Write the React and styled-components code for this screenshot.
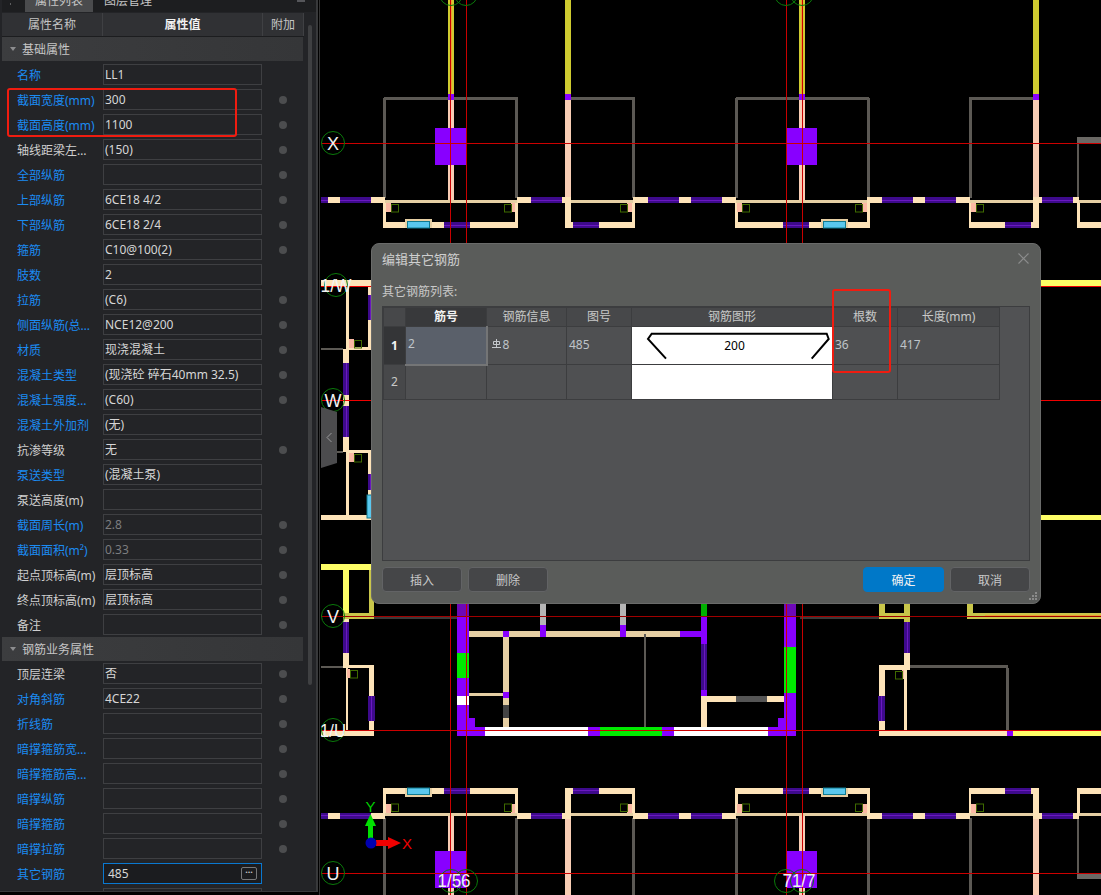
import React from 'react';
import styled, { createGlobalStyle } from 'styled-components';

const FONT = '"Noto Sans", "Noto Sans CJK SC", sans-serif';

const GlobalStyle = createGlobalStyle`
  html, body {
    margin: 0;
    padding: 0;
    background: #000;
  }
  body {
    font-family: ${FONT};
    font-size: 12px;
  }
`;

const rows = [
  { label: '名称', value: 'LL1', blue: true },
  { label: '截面宽度(mm)', value: '300', blue: true, dot: true },
  { label: '截面高度(mm)', value: '1100', blue: true, dot: true },
  { label: '轴线距梁左边线距离(mm)', value: '(150)', dot: true },
  { label: '全部纵筋', value: '', blue: true, dot: true },
  { label: '上部纵筋', value: '6CE18 4/2', blue: true, dot: true },
  { label: '下部纵筋', value: '6CE18 2/4', blue: true, dot: true },
  { label: '箍筋', value: 'C10@100(2)', blue: true, dot: true },
  { label: '肢数', value: '2', blue: true },
  { label: '拉筋', value: '(C6)', blue: true, dot: true },
  { label: '侧面纵筋(总配筋值)', value: 'NCE12@200', blue: true, dot: true },
  { label: '材质', value: '现浇混凝土', blue: true, dot: true },
  { label: '混凝土类型', value: '(现浇砼 碎石40mm 32.5)', blue: true, dot: true },
  { label: '混凝土强度等级', value: '(C60)', blue: true, dot: true },
  { label: '混凝土外加剂', value: '(无)', blue: true },
  { label: '抗渗等级', value: '无', dot: true },
  { label: '泵送类型', value: '(混凝土泵)', blue: true },
  { label: '泵送高度(m)', value: '' },
  { label: '截面周长(m)', value: '2.8', blue: true, dot: true, dim: true },
  { label: '截面面积(m²)', value: '0.33', blue: true, dot: true, dim: true },
  { label: '起点顶标高(m)', value: '层顶标高', dot: true },
  { label: '终点顶标高(m)', value: '层顶标高', dot: true },
  { label: '备注', value: '', dot: true },
];

const rebarRows = [
  { label: '顶层连梁', value: '否', dot: true },
  { label: '对角斜筋', value: '4CE22', blue: true, dot: true },
  { label: '折线筋', value: '', blue: true, dot: true },
  { label: '暗撑箍筋宽度(mm)', value: '', blue: true, dot: true },
  { label: '暗撑箍筋高度(mm)', value: '', blue: true, dot: true },
  { label: '暗撑纵筋', value: '', blue: true, dot: true },
  { label: '暗撑箍筋', value: '', blue: true, dot: true },
  { label: '暗撑拉筋', value: '', blue: true, dot: true },
  { label: '其它钢筋', value: '485', blue: true, active: true },
  { label: '', value: '' },
];

const Page = styled.div`
  display: flex;
  width: 1101px;
  height: 895px;
  overflow: hidden;
  background: #000;
`;

const Panel = styled.aside`
  position: relative;
  flex: 0 0 318px;
  height: 892px;
  display: flex;
  flex-direction: column;
  overflow: hidden;
  box-sizing: border-box;
  padding-left: 2px;
  background: #232427;
  border-right: 2px solid #38393b;
  border-bottom: 1px solid #38393b;
`;

const TabBar = styled.div`
  flex: 0 0 12px;
  display: flex;
  align-items: flex-end;
  overflow: hidden;
  background: #1d1e20;
`;

const Grip = styled.span`
  width: 7px;
  height: 4px;
  margin: 0 10px 6px 6px;
  background-image: radial-gradient(#5d5e60 1px, transparent 1px);
  background-size: 5px 4px;
`;

const Tab = styled.div`
  flex: 0 0 auto;
  width: ${(p) => (p.$on ? '68px' : '70px')};
  height: 22px;
  line-height: 22px;
  text-align: center;
  color: #c6c6c6;
  background: ${(p) => (p.$on ? '#4a4b4d' : 'transparent')};
  font-size: 12px;
`;

const PinMark = styled.span`
  align-self: flex-start;
  width: 8px;
  height: 2px;
  margin: 0 11px 0 auto;
  background: #55565a;
`;

const HeadRow = styled.div`
  flex: 0 0 24px;
  width: 302px;
  display: grid;
  grid-template-columns: 101px 160px 41px;
  background: #303134;
  margin-top: 1px;
  box-sizing: border-box;
  border-bottom: 1px solid #1c1d1f;
`;

const HeadCell = styled.div`
  line-height: 23px;
  text-align: center;
  color: ${(p) => (p.$strong ? '#f0f0f0' : '#c4c4c4')};
  font-weight: ${(p) => (p.$strong ? 700 : 400)};
  border-right: 1px solid #3f4043;
`;

const GroupRow = styled.div`
  flex: 0 0 24px;
  width: 301px;
  display: flex;
  align-items: center;
  gap: 6px;
  padding-left: 8px;
  box-sizing: border-box;
  background: linear-gradient(90deg, #3c3d3f, #353638);
  color: #c6c6c6;
  margin-bottom: ${(p) => p.$gap || 0}px;
`;

const GroupArrow = styled.span`
  width: 0;
  height: 0;
  border-left: 3px solid transparent;
  border-right: 3px solid transparent;
  border-top: 4px solid #8c8d8f;
`;

const Row = styled.div`
  flex: 0 0 25px;
  display: grid;
  grid-template-columns: 15px 86px 159px 41px;
  align-items: center;
  width: 301px;
`;

const Label = styled.div`
  grid-column: 2;
  width: 80px;
  white-space: nowrap;
  overflow: hidden;
  text-overflow: ellipsis;
  color: ${(p) => (p.$blue ? '#1b8bf2' : '#cfcfcf')};
`;

const Field = styled.div`
  position: relative;
  grid-column: 3;
  height: 21px;
  line-height: 19px;
  box-sizing: border-box;
  padding: 0 ${(p) => (p.$active ? '4px' : '1px')};
  white-space: nowrap;
  overflow: hidden;
  font-size: 12px;
  color: ${(p) => (p.$dim ? '#7c7d7f' : '#d6d6d6')};
  background: ${(p) => (p.$active ? '#1b1c1f' : 'transparent')};
  border: 1px solid ${(p) => (p.$active ? '#0a78d0' : '#3e3f42')};
`;

const MoreButton = styled.span`
  position: absolute;
  right: 4px;
  top: 3px;
  width: 14px;
  height: 11px;
  border: 1px solid #77787a;
  border-radius: 2px;
  color: #c8c8c8;
  font-size: 9px;
  font-weight: 700;
  line-height: 7px;
  text-align: center;
`;

const Dot = styled.span`
  grid-column: 4;
  justify-self: center;
  width: 8px;
  height: 8px;
  margin-left: 1px;
  border-radius: 50%;
  background: #4c4d4f;
`;

const Scrollbar = styled.div`
  position: absolute;
  left: 308px;
  top: 25px;
  width: 4px;
  height: 660px;
  border-radius: 2px;
  background: #3f4042;
`;

const Canvas = styled.main`
  position: relative;
  flex: 1;
  margin-left: 1px;
  border-left: 1px solid #333;
  height: 895px;
  background: #000;
`;

const Drawing = styled.svg`
  display: block;
  font-family: "Liberation Sans", sans-serif;
`;

const CollapseHandle = styled.div`
  position: absolute;
  left: 1px;
  top: 407px;
  width: 16px;
  height: 61px;
  display: flex;
  align-items: center;
  justify-content: center;
  background: #4c4c4e;
  clip-path: polygon(0 0, 100% 8%, 100% 92%, 0 100%);
`;

const Dialog = styled.section`
  position: absolute;
  left: 51px;
  top: 243px;
  width: 670px;
  height: 361px;
  display: flex;
  flex-direction: column;
  box-sizing: border-box;
  padding: 0 10px 11px 10px;
  background: #5a5c5a;
  border: 1px solid #6a6b6a;
  border-radius: 8px;
  color: #c8c8c8;
`;

const TitleBar = styled.header`
  flex: 0 0 29px;
  display: flex;
  align-items: center;
  justify-content: space-between;
  font-size: 13px;
  color: #cfcfcf;
  padding-right: 1px;
`;

const ListLabel = styled.div`
  flex: 0 0 33px;
  display: flex;
  align-items: center;
  padding-top: 2px;
  box-sizing: border-box;
  font-size: 12px;
`;

const TableWrap = styled.div`
  flex: 1;
  background: #515254;
  border: 1px solid #3c3d3f;
  overflow: hidden;
`;

const Table = styled.table`
  border-collapse: collapse;
  table-layout: fixed;
  width: 616px;
`;

const Th = styled.th`
  height: 18px;
  padding: 0;
  line-height: 14px;
  font-weight: ${(p) => (p.$on ? 700 : 400)};
  font-size: 12px;
  color: ${(p) => (p.$on ? '#f2f2f2' : '#c8c8c8')};
  background: ${(p) => (p.$on ? '#38393b' : '#47484a')};
  border: 1px solid #3c3d3f;
`;

const RowHead = styled.td`
  padding: 0;
  text-align: center;
  line-height: 14px;
  font-weight: ${(p) => (p.$on ? 700 : 400)};
  color: ${(p) => (p.$on ? '#f5f5f5' : '#c8c8c8')};
  background: ${(p) => (p.$on ? '#343537' : '#47484a')};
  border: 1px solid #3c3d3f;
`;

const Td = styled.td`
  height: ${(p) => p.$h}px;
  padding: 0 0 2px 2px;
  box-sizing: border-box;
  line-height: 14px;
  font-size: 12px;
  color: #bfc4c9;
  background: ${(p) => (p.$on ? '#5a606a' : '#4f5052')};
  border: 1px solid #3c3d3f;
  ${(p) => p.$on && 'border-right: 2px solid #747576; border-bottom: 2px solid #747576;'}
`;

const ShapeCell = styled.td`
  padding: 0;
  background: #fff;
  border: 1px solid #3c3d3f;
`;

const Footer = styled.footer`
  flex: 0 0 31px;
  display: flex;
  align-items: flex-end;
  gap: 6px;
`;

const Spacer = styled.div`
  flex: 1;
  margin-right: 9px;
`;

const Button = styled.button`
  width: ${(p) => (p.$primary ? '81px' : '80px')};
  height: 25px;
  padding: 0;
  font-family: ${FONT};
  font-size: 12px;
  color: ${(p) => (p.$primary ? '#f2f2f2' : '#c8c8c8')};
  background: ${(p) => (p.$primary ? '#0078c8' : '#454648')};
  border: 1px solid ${(p) => (p.$primary ? '#0078c8' : '#626365')};
  border-radius: 4px;
`;

const ResizeGrip = styled.svg`
  position: absolute;
  right: 2px;
  bottom: 2px;
`;

const Glyph = styled.svg`
  margin: 0 2px 3px 2px;
  vertical-align: middle;
`;

const ShapeSvg = styled.svg`
  display: block;
`;

const Mark = styled.div`
  position: absolute;
  box-sizing: border-box;
  border: 2.5px solid #f01c10;
  border-radius: 3px;
  pointer-events: none;
  left: ${(p) => p.$x}px;
  top: ${(p) => p.$y}px;
  width: ${(p) => p.$w}px;
  height: ${(p) => p.$h}px;
`;

const CREAM = '#fde3b8';
const PEACH = '#f8cdb4';
const PURPLE = '#8800ff';
const GREY = '#5c5954';
const OLIVE = '#c9c64a';
const YELLOW = '#fdfd66';
const TAN = '#e6cfa4';

const Box = ({ x, y, x2, y2, c }) => (
  <rect x={x} y={y} width={x2 - x} height={y2 - y} fill={c} />
);

const Door = ({ x, y, x2, y2 }) => {
  const wide = x2 - x > y2 - y;
  return (
    <g>
      <Box x={x} y={y} x2={x2} y2={y2} c="#3e0a8c" />
      {wide ? (
        <Box x={x} y={Math.floor((y + y2) / 2)} x2={x2} y2={Math.floor((y + y2) / 2) + 1} c="#6a18c0" />
      ) : (
        <Box x={Math.floor((x + x2) / 2)} y={y} x2={Math.floor((x + x2) / 2) + 1} y2={y2} c="#6a18c0" />
      )}
    </g>
  );
};

const Corner = ({ x, y, w = 5, flip }) => (
  <g>
    <Box x={flip ? x + 7 : x} y={y} x2={flip ? x + 7 + w : x + w} y2={y + 9} c="#fbb9a4" />
    <rect x={flip ? x + 0.5 : x + w + 0.5} y={y + 1.5} width={7} height={7.5} fill="none" stroke="#3f6a00" />
  </g>
);

const Bubble = ({ x, y, label, size = 18, tl }) => (
  <g>
    <circle cx={x} cy={y} r={11.5} fill="none" stroke="#0a7a0a" strokeWidth={1} />
    {label && (
      <text x={x} y={y + 7} fill="#f2f2f2" fontSize={size} textAnchor="middle" textLength={tl} lengthAdjust="spacingAndGlyphs">
        {label}
      </text>
    )}
  </g>
);

const Bar = ({ x, stripe }) => (
  <g>
    <Box x={x} y={0} x2={x + 6} y2={94} c="#cfcb30" />
    {stripe && <Box x={x + 2} y={0} x2={x + 4} y2={94} c="#f0a030" />}
    <Box x={x} y={94} x2={x + 6} y2={100} c={PURPLE} />
    <Box x={x} y={100} x2={x + 6} y2={200} c={PEACH} />
  </g>
);

// half of the plan, the lower half is the same drawing mirrored
const HalfPlan = () => (
  <g>
    {[[384, 518], [571, 635], [736, 869], [969, 1033]].map(([a, b]) => (
      <Box key={a} x={a} y={97} x2={b} y2={100} c={GREY} />
    ))}
    {[383, 515, 632, 735, 867, 969].map((x) => (
      <Box key={x} x={x} y={98} x2={x + 3} y2={198} c={GREY} />
    ))}
    <Box x={1077} y={137} x2={1079} y2={198} c={GREY} />
    <Box x={1077} y={137} x2={1101} y2={143} c="#6a6864" />
    <Bar x={448} stripe />
    <Bar x={565} />
    <Bar x={799} stripe />
    <Bar x={1033} />
    <Box x={435} y={128} x2={466} y2={165} c={PURPLE} />
    <Box x={787} y={128} x2={817} y2={165} c={PURPLE} />

    {[[328, 340], [371, 385], [517, 531], [562, 571], [633, 648], [679, 691], [722, 736], [867, 882], [913, 925], [956, 970], [1033, 1042], [1073, 1079]].map(([a, b]) => (
      <Box key={a} x={a} y={197} x2={b} y2={203} c={CREAM} />
    ))}
    {[[385, 517], [571, 633], [736, 867], [970, 1033], [1079, 1101]].map(([a, b]) => (
      <Box key={a} x={a} y={200} x2={b} y2={203} c={TAN} />
    ))}
    {[[321, 328], [340, 371], [531, 562], [648, 679], [691, 722], [882, 913], [925, 956], [1042, 1073]].map(([a, b]) => (
      <Door key={a} x={a} y={197} x2={b} y2={203} />
    ))}

    {[[383, 386], [515, 518], [565, 571], [632, 635], [735, 738], [867, 870], [969, 971], [1033, 1039], [1077, 1080]].map(([a, b]) => (
      <Box key={a} x={a} y={203} x2={b} y2={228} c={CREAM} />
    ))}
    {[[383, 518], [565, 635], [735, 870], [969, 1039], [1077, 1101]].map(([a, b]) => (
      <Box key={a} x={a} y={222} x2={b} y2={228} c={CREAM} />
    ))}
    {[[405, 432], [821, 848]].map(([a, b]) => (
      <g key={a}>
        <Box x={a} y={219} x2={b} y2={228} c={TAN} />
        <rect x={a + 2.5} y={221.5} width={b - a - 5} height={6.5} fill="#5ac8ee" stroke="#0f7a90" />
      </g>
    ))}
    {[[444, 470], [573, 599], [783, 809], [1005, 1031]].map(([a, b]) => (
      <Door key={a} x={a} y={222} x2={b} y2={228} />
    ))}
    <Corner x={386} y={203} />
    <Corner x={504} y={203} w={4} flip />
    <Corner x={620} y={203} flip />
    <Corner x={737} y={203} />
    <Corner x={855} y={203} flip />
    <Corner x={971} y={203} />
  </g>
);

const axisColor = (y) => {
  if (y === 286 || y === 400) return '#f00000';
  if (y === 616) return '#a00000';
  return '#cc0000';
};

const Plan = () => (
  <Drawing width={781} height={895} viewBox="320 0 781 895">
    <HalfPlan />
    <g transform="matrix(1 0 0 -1 0 1016)">
      <HalfPlan />
    </g>

    {/* left strip beside the dialog */}
    <Box x={321} y={280} x2={372} y2={286} c={CREAM} />
    <Box x={346} y={286} x2={349} y2={350} c={CREAM} />
    <Box x={368} y={286} x2={372} y2={350} c={CREAM} />
    <Door x={368} y={295} x2={372} y2={320} />
    <Box x={349} y={347} x2={372} y2={350} c={CREAM} />
    <Corner x={349} y={339} />
    <Box x={321} y={348} x2={343} y2={350} c={GREY} />
    <Box x={343} y={349} x2={349} y2={452} c={CREAM} />
    <Door x={343} y={363} x2={349} y2={395} />
    <Door x={343} y={406} x2={349} y2={437} />
    <Box x={321} y={451} x2={343} y2={453} c={GREY} />
    <Box x={346} y={450} x2={372} y2={453} c={CREAM} />
    <Corner x={349} y={453} />
    <Box x={346} y={453} x2={349} y2={516} c={CREAM} />
    <Box x={368} y={453} x2={372} y2={516} c={CREAM} />
    <Door x={368} y={474} x2={372} y2={490} />
    <Box x={321} y={515} x2={372} y2={520} c={CREAM} />
    <rect x={367} y={495} width={5} height={23} fill="#5ac8ee" stroke="#0f7a90" />
    <Box x={321} y={564} x2={372} y2={570} c={YELLOW} />
    <Box x={343} y={570} x2={349} y2={619} c={YELLOW} />
    <Box x={369} y={570} x2={374} y2={619} c={OLIVE} />
    <Box x={343} y={613} x2={374} y2={619} c={OLIVE} />
    <Box x={374} y={617} x2={458} y2={619} c="#3a3a3a" />

    {/* lower left room */}
    <Box x={343} y={619} x2={349} y2={668} c={CREAM} />
    <Door x={343} y={622} x2={349} y2={653} />
    <Box x={321} y={666} x2={343} y2={668} c={GREY} />
    <Box x={343} y={665} x2={374} y2={668} c={CREAM} />
    <Box x={346} y={668} x2={348} y2={730} c={CREAM} />
    <Box x={369} y={668} x2={374} y2={730} c={CREAM} />
    <Door x={368} y={696} x2={375} y2={721} />
    <Corner x={347} y={669} w={3} />
    <Box x={321} y={730} x2={374} y2={736} c={CREAM} />

    {/* central core */}
    <Box x={469} y={631} x2={680} y2={637} c={TAN} />
    <Box x={503} y={631} x2={509} y2={637} c={PURPLE} />
    <Box x={540} y={604} x2={546} y2={625} c="#b5b5b5" />
    <Box x={620} y={604} x2={626} y2={625} c="#b5b5b5" />
    <Box x={540} y={625} x2={546} y2={637} c={PURPLE} />
    <Box x={620} y={625} x2={626} y2={637} c={PURPLE} />
    <Box x={680} y={631} x2={702} y2={637} c={PURPLE} />
    <Box x={644} y={634} x2={646} y2={727} c={GREY} />
    <Box x={503} y={637} x2={509} y2={727} c={TAN} />
    <Box x={469} y={693} x2={503} y2={696} c={TAN} />
    <Box x={503} y={692} x2={509} y2={698} c={PURPLE} />
    <Box x={503} y={705} x2={509} y2={718} c="#444" />
    <Box x={457} y={604} x2={469} y2={736} c={PURPLE} />
    <Box x={457} y={604} x2={469} y2={616} c="#6e08b8" />
    <Box x={457} y={653} x2={469} y2={678} c="#00ea00" />
    <Box x={457} y={696} x2={469} y2={705} c="#fff" />
    <Box x={469} y={718} x2={475} y2={730} c={PURPLE} />
    <Box x={469} y={727} x2={485} y2={736} c={PURPLE} />
    <Box x={485} y={727} x2={768} y2={736} c="#fff" />
    <Box x={588} y={727} x2={600} y2={736} c={PURPLE} />
    <Box x={600} y={727} x2={662} y2={736} c="#00ea00" />
    <Box x={662} y={727} x2={674} y2={736} c={PURPLE} />
    <Box x={701} y={604} x2={707} y2={616} c="#00b000" />
    <Box x={701} y={616} x2={707} y2={644} c={PURPLE} />
    <Door x={701} y={644} x2={707} y2={690} />
    <Box x={701} y={690} x2={707} y2={696} c={PURPLE} />
    <Box x={701} y={696} x2={707} y2={727} c={CREAM} />
    <Box x={701} y={696} x2={784} y2={702} c={CREAM} />
    <Box x={736} y={696} x2={767} y2={702} c="#555" />
    <Box x={778} y={718} x2={784} y2={727} c={PURPLE} />
    <Box x={768} y={727} x2={784} y2={736} c={PURPLE} />
    <Box x={784} y={604} x2={796} y2={736} c={PURPLE} />
    <Box x={784} y={604} x2={796} y2={616} c="#6e08b8" />
    <Box x={784} y={647} x2={796} y2={693} c="#00ea00" />

    {/* right room */}
    <Box x={879} y={604} x2={885} y2={619} c={OLIVE} />
    <Box x={904} y={604} x2={910} y2={622} c={OLIVE} />
    <Box x={879} y={613} x2={910} y2={619} c={OLIVE} />
    <Box x={800} y={617} x2={879} y2={619} c="#3a3a3a" />
    <Door x={904} y={622} x2={910} y2={653} />
    <Box x={904} y={653} x2={910} y2={668} c={CREAM} />
    <Box x={879} y={665} x2={910} y2={670} c={CREAM} />
    <Box x={879} y={668} x2={885} y2={730} c={CREAM} />
    <Door x={878} y={696} x2={885} y2={721} />
    <Box x={904} y={668} x2={907} y2={730} c={CREAM} />
    <Corner x={895} y={670} w={2} flip />
    <Box x={910} y={665} x2={1008} y2={668} c={GREY} />
    <Box x={1006} y={668} x2={1009} y2={730} c={GREY} />
    <Box x={879} y={730} x2={1007} y2={736} c={CREAM} />
    <Box x={1007} y={730} x2={1013} y2={736} c={PURPLE} />
    <Box x={1013} y={730} x2={1101} y2={736} c={YELLOW} />
    <Box x={967} y={604} x2={973} y2={619} c={OLIVE} />
    <Box x={967} y={613} x2={1101} y2={619} c={OLIVE} />
    <Box x={985} y={615} x2={1101} y2={617} c="#f0a030" />

    {/* right strip beside the dialog */}
    <Box x={1041} y={280} x2={1101} y2={286} c={YELLOW} />
    <Box x={1041} y={515} x2={1101} y2={520} c={YELLOW} />

    {/* axis lines */}
    {[143, 286, 400, 616, 730, 873].map((y) => (
      <Box key={y} x={321} y={y} x2={1101} y2={y + 1} c={axisColor(y)} />
    ))}
    {[450, 466, 786, 802].map((x) => (
      <Box key={x} x={x} y={0} x2={x + 1} y2={895} c="#c80000" />
    ))}

    <Bubble x={333} y={143} label="X" />
    <Bubble x={336} y={285} label="1/W" tl={31} />
    <Bubble x={333} y={400} label="W" />
    <Bubble x={333} y={616} label="V" />
    <Bubble x={333} y={730} label="1/U" tl={26} />
    <Bubble x={333} y={873} label="U" />
    <Bubble x={451} y={-6} />
    <Bubble x={466} y={-6} />
    <Bubble x={786} y={-6} />
    <Bubble x={802} y={-6} />
    <Bubble x={451} y={881} />
    <Bubble x={466} y={881} />
    <text x={454} y={887} fill="#f2f2f2" fontSize={18} textAnchor="middle" textLength={33} lengthAdjust="spacingAndGlyphs">1/56</text>
    <Bubble x={786} y={881} />
    <Bubble x={802} y={881} />
    <text x={799} y={887} fill="#f2f2f2" fontSize={18} textAnchor="middle" textLength={33} lengthAdjust="spacingAndGlyphs">71/7</text>

    {/* coordinate marker */}
    <Box x={368} y={824} x2={373} y2={840} c="#00e000" />
    <polygon points="370.5,814 376,826 365,826" fill="#00e000" />
    <text x={370.5} y={812} fill="#00d000" fontSize={15} textAnchor="middle">Y</text>
    <Box x={376} y={840} x2={390} y2={846} c="#f00000" />
    <polygon points="401,843 388,837 388,849" fill="#f00000" />
    <text x={407} y={849} fill="#f00000" fontSize={15} textAnchor="middle">X</text>
    <circle cx={371} cy={843} r={5.5} fill="#0000b0" />
  </Drawing>
);

const PropertyRow = ({ label, value, blue, dot, dim, active }) => (
  <Row>
    {label && <Label $blue={blue}>{label}</Label>}
    <Field $dim={dim} $active={active}>
      {value}
      {active && <MoreButton>···</MoreButton>}
    </Field>
    {dot && <Dot />}
  </Row>
);

const RebarGlyph = () => (
  <Glyph width="9" height="9" viewBox="0 0 9 9" fill="none" stroke="#c4c8cc" strokeWidth="1">
    <path d="M0 8.5H9M4.5 0V8.5M1.5 5.5V2.5H7.5V5.5H1.5" />
  </Glyph>
);

const BendShape = () => (
  <ShapeSvg width="200" height="36" viewBox="632 327 200 36">
    <path
      d="M666 357.7L648 338L651.7 332.7H826.7L828.7 338L811.7 357.7"
      fill="none"
      stroke="#000"
      strokeWidth="2"
    />
    <text x="734.5" y="349" fontFamily={FONT} fontSize="12" fill="#000" textAnchor="middle">200</text>
  </ShapeSvg>
);

const EditRebarDialog = () => (
  <Dialog>
    <TitleBar>
      <span>编辑其它钢筋</span>
      <svg width="11" height="11" viewBox="0 0 11 11" stroke="#8b8c8c" strokeWidth="1.1">
        <path d="M0.5 0.5L10.5 10.5M10.5 0.5L0.5 10.5" />
      </svg>
    </TitleBar>
    <ListLabel>其它钢筋列表:</ListLabel>
    <TableWrap>
      <Table>
        <colgroup>
          <col width="22" />
          <col width="81" />
          <col width="80" />
          <col width="65" />
          <col width="201" />
          <col width="65" />
          <col width="102" />
        </colgroup>
        <thead>
          <tr>
            <Th />
            <Th $on>筋号</Th>
            <Th>钢筋信息</Th>
            <Th>图号</Th>
            <Th>钢筋图形</Th>
            <Th>根数</Th>
            <Th>长度(mm)</Th>
          </tr>
        </thead>
        <tbody>
          <tr>
            <RowHead $on>1</RowHead>
            <Td $h={38} $on>2</Td>
            <Td $h={38}>
              <RebarGlyph />8
            </Td>
            <Td $h={38}>485</Td>
            <ShapeCell>
              <BendShape />
            </ShapeCell>
            <Td $h={38}>36</Td>
            <Td $h={38}>417</Td>
          </tr>
          <tr>
            <RowHead>2</RowHead>
            <Td $h={35} />
            <Td $h={35} />
            <Td $h={35} />
            <ShapeCell />
            <Td $h={35} />
            <Td $h={35} />
          </tr>
        </tbody>
      </Table>
    </TableWrap>
    <Footer>
      <Button>插入</Button>
      <Button>删除</Button>
      <Spacer />
      <Button $primary>确定</Button>
      <Button>取消</Button>
    </Footer>
    <ResizeGrip width="9" height="9" viewBox="0 0 9 9" fill="#8a8b8a">
      <rect x="6" y="0" width="2" height="2" />
      <rect x="3" y="3" width="2" height="2" />
      <rect x="6" y="3" width="2" height="2" />
      <rect x="0" y="6" width="2" height="2" />
      <rect x="3" y="6" width="2" height="2" />
      <rect x="6" y="6" width="2" height="2" />
    </ResizeGrip>
  </Dialog>
);

export default function App() {
  return (
    <>
      <GlobalStyle />
      <Page>
        <Panel>
          <TabBar>
            <Grip />
            <Tab $on>属性列表</Tab>
            <Tab>图层管理</Tab>
            <PinMark />
          </TabBar>
          <HeadRow>
            <HeadCell>属性名称</HeadCell>
            <HeadCell $strong>属性值</HeadCell>
            <HeadCell>附加</HeadCell>
          </HeadRow>
          <GroupRow $gap={1}>
            <GroupArrow />
            基础属性
          </GroupRow>
          {rows.map((row) => (
            <PropertyRow key={row.label} {...row} />
          ))}
          <GroupRow $gap={0}>
            <GroupArrow />
            钢筋业务属性
          </GroupRow>
          {rebarRows.map((row) => (
            <PropertyRow key={row.label || 'last'} {...row} />
          ))}
          <Scrollbar />
        </Panel>
        <Canvas>
          <Plan />
          <CollapseHandle>
            <svg width="7" height="11" viewBox="0 0 7 11" fill="none" stroke="#9a9a9c" strokeWidth="1">
              <path d="M5.5 1L1 5.5L5.5 10" />
            </svg>
          </CollapseHandle>
          <EditRebarDialog />
          <Mark $x={-313} $y={88} $w={230} $h={49} />
          <Mark $x={512} $y={289} $w={59} $h={84} />
        </Canvas>
      </Page>
    </>
  );
}
